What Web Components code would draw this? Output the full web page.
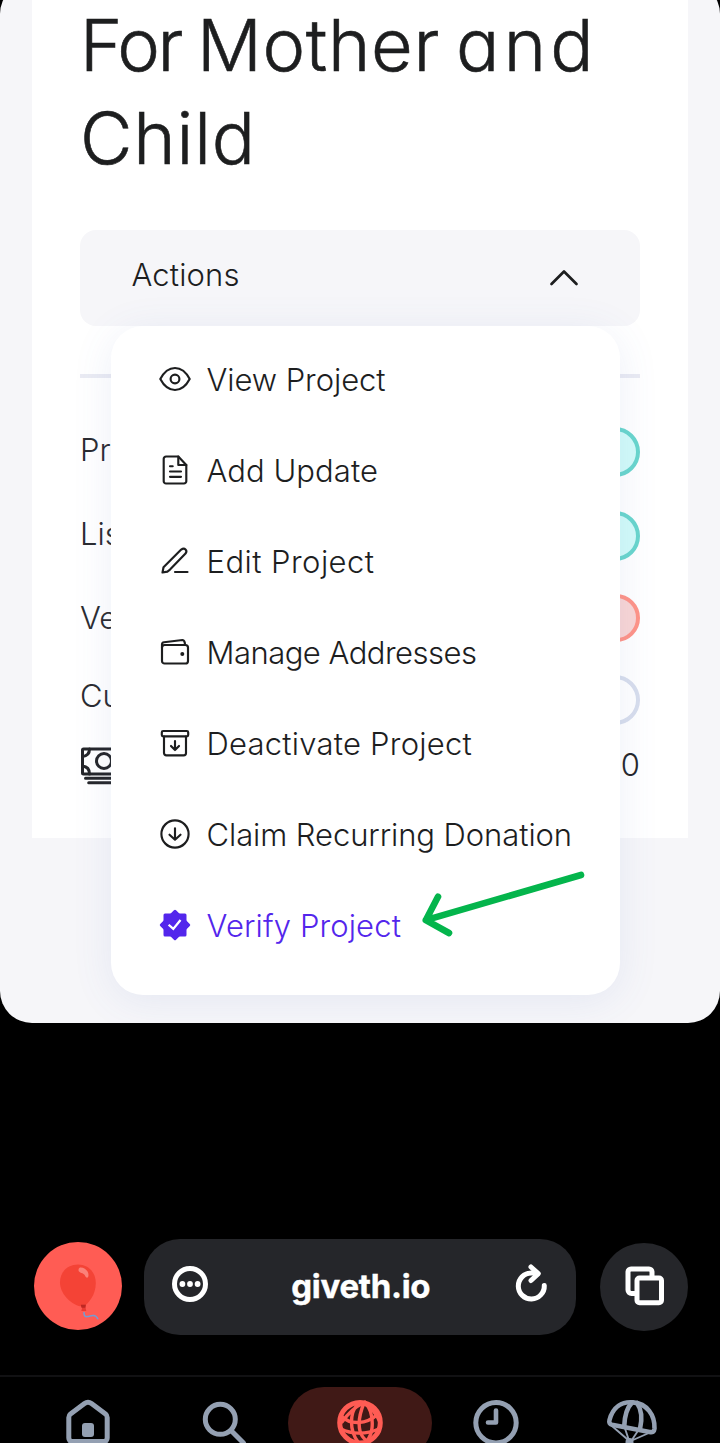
<!DOCTYPE html>
<html lang="en">
<head>
<meta charset="utf-8">
<title>giveth.io</title>
<style>
  html, body { margin: 0; background: #000; }
  body { width: 720px; height: 1443px; overflow: hidden; font-family: Inter, "Noto Sans", sans-serif; }
</style>
</head>
<body>
<phone-app></phone-app>
<script>
const define = (name, html, setup) => {
  const template = document.createElement('template');
  template.innerHTML = html;
  customElements.define(name, class extends HTMLElement {
    connectedCallback() {
      if (this.shadowRoot) return;
      this.attachShadow({ mode: 'open' }).append(template.content.cloneNode(true));
      if (setup) setup(this, this.shadowRoot);
    }
  });
};

// Single line of text whose tracking is tuned to fill a given advance width.
define('track-text', `
  <style>
    :host { display: block; white-space: nowrap; }
    span { display: inline-block; }
  </style>
  <span><slot></slot></span>`, (host, root) => {
  const span = root.querySelector('span');
  const width = parseFloat(host.getAttribute('width'));
  if (!width) return;
  const gap = (width - span.getBoundingClientRect().width) / host.textContent.length;
  span.style.letterSpacing = gap.toFixed(3) + 'px';
});

const line = (w = 2.15) => `fill="none" stroke="currentColor" stroke-width="${w}" stroke-linecap="round" stroke-linejoin="round"`;
const icons = {
  eye: [32, 32, `<g ${line()}><path d="M1.3 16C5 9 10 5 16 5s11 4 14.700 11C27 23 22 27 16 27S5 23 1.300 16z"/><circle cx="16" cy="16" r="4.400"/></g>`],
  doc: [32, 32, `<g ${line()}><path d="M19.300 2.500H7a2.300 2.300 0 0 0-2.300 2.300v22.400A2.300 2.300 0 0 0 7 29.500h18a2.300 2.300 0 0 0 2.300-2.300V11z"/><path d="M19.300 2.500V11h8M11 12.200h2.700M11 17.500h11M11 22.800h11"/></g>`],
  pen: [32, 32, `<g ${line()}><path d="M3.500 27.500l1-5.300L22.200 4.600c3.400-2.600 6.700.8 4.300 4L11 24.600l-2.600 2z"/><path d="M16 27h12.500"/></g>`],
  wallet: [32, 32, `<g ${line()}><rect x="3" y="9" width="26" height="18.500" rx="2.600"/><path d="M3 11.500V8.400c0-1.200.7-1.900 2-2.100L23.500 4c1.400-.1 2.500 2 2.500 5"/></g><circle cx="23.300" cy="18" r="2" fill="currentColor"/>`],
  archive: [32, 32, `<g ${line()}><rect x="2.800" y="4" width="26.400" height="5.300" rx="1.400"/><path d="M5 9.500V26a2.300 2.300 0 0 0 2.300 2.300h17.400A2.300 2.300 0 0 0 27 26V9.500M16 14v9M12 19l4 4 4-4"/></g>`],
  claim: [32, 32, `<g ${line()}><circle cx="16" cy="16" r="13.600"/><path d="M16 10.300V21.500M10.500 16.700l5.500 5 5.500-5"/></g>`],
  verify: [32, 32, `<g fill="currentColor" stroke="currentColor" stroke-width="3" stroke-linejoin="round"><rect x="6" y="6" width="20" height="20"/><path d="M16 2.300L29.700 16 16 29.700 2.300 16z"/></g><path d="M10.500 16.500l3.800 3.400 6.500-8" fill="none" stroke="#fff" stroke-width="2.300" stroke-linecap="square"/>`],
  chevron: [32, 20, `<path d="M3.500 17L16 4.500 28.500 17" ${line(2.7)}/>`],
  cash: [54, 38, `<g ${line(3)}><rect x="2.500" y="2" width="49" height="25" rx="1"/><circle cx="24" cy="14" r="7.500"/><path d="M9.500 2c0 4.500-2.500 7-7 7.500M2.500 19c4.500.5 7 3.500 7 8M5.500 31.200h43M8.700 35.800h37"/></g>`],
  balloon: [88, 88, `<path d="M44 22.500c10.500 0 17.800 8 17.800 18.500 0 12-7.300 20.500-12 23.300h-4C36 61.500 26 51.500 26 40.500 26 30 33.500 22.500 44 22.500z" fill="#f44336"/><path d="M46 25.500c4-.5 8.500 3 8.500 7.500 0 3.500-2.500 3.500-3.700.3-.8-2.300-6.300-2.300-6.300-5 0-1.400.5-2.400 1.500-2.800z" fill="#fb8179"/><path d="M47 63l5-.5-.5 3 .8 3.500h-5l.8-3z" fill="#e93a32"/><path d="M46.800 62.800h5l-.5 3h-3.800z" fill="#bc2823"/><path d="M50 70c-.2 3.500.8 4.900 3.500 4.600 2.500-.3 4-1.700 6.500-1.100 2.300.5 3.300 1.900 4 3.800" fill="none" stroke="#749cd4" stroke-width="1.500"/>`],
  more: [36, 36, `<circle cx="18" cy="18" r="15.500" ${line(5)}/><g fill="currentColor"><circle cx="10.400" cy="18" r="2.900"/><circle cx="18" cy="18" r="2.900"/><circle cx="25.600" cy="18" r="2.900"/></g>`],
  reload: [36, 40, `<g ${line(5)}><path d="M31.300 21.500A13 13 0 1 1 18.300 9h4.500"/><path d="M18 3l7.300 6.600-7.300 6.900"/></g>`],
  tabs: [40, 40, `<g ${line(5)}><path d="M10.500 27.500H6.500a3.500 3.500 0 0 1-3.500-3.500V6a3 3 0 0 1 3-3h18a3 3 0 0 1 3 3v4"/><rect x="12" y="12" width="24.500" height="24.800" rx="2.500"/></g>`],
  home: [48, 48, `<path d="M4.800 19.500c0-1.500.6-2.700 1.700-3.600L20.500 5.500c2.300-1.700 4.700-1.700 7 0l14 10.400c1.100.9 1.700 2.100 1.700 3.600V40c0 2-1.200 3.500-3.500 3.500H8.300c-2.300 0-3.500-1.500-3.500-3.500z" ${line(5)}/><rect x="18" y="25" width="12" height="14" rx="3" fill="currentColor"/>`],
  search: [48, 48, `<circle cx="20.300" cy="21.300" r="15" ${line(5)}/><path d="M31.500 33l12 12" ${line(5)}/>`],
  globe: [48, 48, `<g ${line(4)}><circle cx="24" cy="24.700" r="20.300" stroke-width="5"/><g stroke-width="3.400"><path d="M21 7C14 15 13 32 22 44M27 5C17 10 11 17 6 24M29 4c6 7 8 16 7 26-.4 5-2 9-5 13M28 5c-5 12-6 20-4 28 1 5 4 8 8 11"/><path d="M5 18c9 9 25 9 37-2M5 31c10 5 24 6 38 0M27 5c8 4 13 10 17 19"/></g></g>`],
  clock: [48, 48, `<circle cx="24" cy="24.700" r="20.200" ${line(5)}/><path d="M24 12.500V24.500H16" ${line(4.6)} />`],
  chute: [56, 48, `<g ${line(4.6)}><path d="M5.500 22C9 9 18 3.300 29 4.400c14 1.300 22 12.500 21.500 26.300-.2 3-2 3.800-5 3.200L8 26.700c-2.300-.5-3.200-2-2.500-4.700z"/><path d="M28 4.600c-5 5-7.500 12-7.800 24M33 5c5 7 5.500 15 3 26"/><path d="M8 28l15 13M20.500 29l4 12M34.500 32l-6 9M46 34.500L29 42" stroke-width="1.900"/><path d="M25.500 44v8" stroke-width="8"/></g>`]
};
define('app-icon', `<style>:host { display: block; flex: none; } svg { display: block; }</style>`, (host, root) => {
  const [w, h, body] = icons[host.getAttribute('name')];
  const box = document.createElement('div');
  box.innerHTML = `<svg width="${w}" height="${h}" viewBox="0 0 ${w} ${h}">${body}</svg>`;
  root.append(box.firstChild);
});

define('menu-item', `
  <style>
    :host { display: flex; align-items: center; gap: 15.500px; height: 91px; color: #1d1e1f; font-size: 31px; line-height: 40px; font-weight: 300; }
    :host([active]) { color: #5326ec; }
    ::slotted(app-icon) { margin-top: -1px; }
    .label { padding-top: 1px; }
  </style>
  <slot name="icon"></slot><div class="label"><slot></slot></div>`);

define('action-menu', `
  <style>
    :host { display: block; box-sizing: border-box; width: 509px; height: 669px; padding: 8px 0 24px 48px; border-radius: 32px; background: #fff; box-shadow: 0 6px 40px rgba(83, 106, 190, .1); }
    svg { position: absolute; left: 309px; top: 541px; }
  </style>
  <menu-item><app-icon slot="icon" name="eye"></app-icon><track-text width="179">View Project</track-text></menu-item>
  <menu-item><app-icon slot="icon" name="doc"></app-icon><track-text width="171.500">Add Update</track-text></menu-item>
  <menu-item><app-icon slot="icon" name="pen"></app-icon><track-text width="168">Edit Project</track-text></menu-item>
  <menu-item><app-icon slot="icon" name="wallet"></app-icon><track-text width="270">Manage Addresses</track-text></menu-item>
  <menu-item><app-icon slot="icon" name="archive"></app-icon><track-text width="265.500">Deactivate Project</track-text></menu-item>
  <menu-item><app-icon slot="icon" name="claim"></app-icon><track-text width="365.500">Claim Recurring Donation</track-text></menu-item>
  <menu-item active><app-icon slot="icon" name="verify"></app-icon><track-text width="194.500">Verify Project</track-text></menu-item>
  <svg width="168" height="74" viewBox="0 0 168 74" fill="none" stroke="#04b54c" stroke-width="6.600" stroke-linecap="round" stroke-linejoin="round">
    <path d="M161 8L5.800 53.200M18 29.800L5.800 53.200 29 66"/>
  </svg>`);

define('status-row', `
  <style>
    :host { display: flex; justify-content: space-between; align-items: center; height: 52px; font-size: 31px; font-weight: 300; color: #2b2c31; }
    track-text { margin-top: var(--lift, -6px); }
    i { box-sizing: border-box; display: block; width: 150px; height: var(--tall, 50px); border-radius: 25px; border: 4px solid var(--edge); background: var(--fill); }
  </style>
  <track-text><slot></slot></track-text><i></i>`);

define('project-card', `
  <style>
    :host { display: block; box-sizing: border-box; width: 656px; height: 856px; margin: 0 auto; padding: 16px 48px 0; background: #fff; }
    h1 { margin: 0; font-size: 72px; line-height: 93px; font-weight: 300; color: #1d1e1f; font-feature-settings: "cv11"; -webkit-text-stroke: .6px #1d1e1f; }
    h1 div { display: flex; gap: 16px; }
    .actions { display: flex; box-sizing: border-box; justify-content: space-between; height: 96px; margin-top: 46px; padding: 0 60px 0 51.500px; border-radius: 16px; background: #f6f6f9; font-size: 31px; line-height: 89px; font-weight: 300; color: #1d1e1f; }
    .actions app-icon { margin-top: 37px; }
    .host { position: relative; height: 0; z-index: 2; }
    action-menu { position: absolute; left: 31px; top: 0; }
    hr { margin: 48px 0 0; height: 4px; border: 0; background: #eaebf3; }
    .rows { display: grid; grid-template-rows: 84px 82px 82px 63px; margin-top: 48px; }
    .cash { display: flex; justify-content: space-between; margin-top: 9px; color: #25262a; font-size: 31px; font-weight: 300; line-height: 38px; }
    .cash app-icon { margin-top: 1px; }
  </style>
  <h1>
    <div><track-text width="101">For</track-text><track-text width="243">Mother</track-text><track-text width="142">and</track-text></div>
    <div><track-text width="176">Child</track-text></div>
  </h1>
  <div class="actions"><track-text width="108">Actions</track-text><app-icon name="chevron"></app-icon></div>
  <div class="host"><action-menu></action-menu></div>
  <hr>
  <div class="rows">
    <status-row style="--edge:#69d6cd;--fill:#d2fbf9">Pr</status-row>
    <status-row style="--edge:#69d6cd;--fill:#d2fbf9">Lis</status-row>
    <status-row style="--edge:#ff9488;--fill:#f9d6d5;--lift:-2px;--tall:48px">Ve</status-row>
    <status-row style="--edge:#d8deed;--fill:transparent;--lift:-10px">Cu</status-row>
  </div>
  <div class="cash"><app-icon name="cash"></app-icon><track-text>0</track-text></div>`);

define('page-view', `
  <style>
    :host { display: block; height: 1041px; margin-top: -18px; border-radius: 32px; background: #f6f6f9; overflow: hidden; }
  </style>
  <slot></slot>`);

define('address-bar', `
  <style>
    :host { display: flex; align-items: center; height: 96px; padding: 0 32px 0 34px; margin-top: 216px; color: #fff; }
    .round { display: grid; place-items: center; box-sizing: border-box; width: 88px; height: 88px; border-radius: 50%; background: #25262a; margin: 0 0 0 24px; padding: 0 0 3px 1px; }
    .red { background: #ff5c54; margin: -2px 22px 0 0; padding: 0; }
    .url { display: flex; box-sizing: border-box; align-items: center; justify-content: space-between; width: 432px; height: 96px; padding: 0 27.500px 0 28px; border-radius: 36px; background: #25262a; font-size: 33px; font-weight: 700; }
    .url app-icon { margin-top: -6px; }
    .url track-text { margin: -2px 0 0 1px; -webkit-text-stroke: .4px #fff; }
  </style>
  <div class="round red"><app-icon name="balloon"></app-icon></div>
  <div class="url"><app-icon name="more"></app-icon><track-text width="139">giveth.io</track-text><app-icon name="reload"></app-icon></div>
  <div class="round"><app-icon name="tabs"></app-icon></div>`);

define('tab-bar', `
  <style>
    :host { display: grid; grid-template-columns: repeat(5, 136px); justify-content: center; margin-top: 40px; padding-top: 10px; border-top: 2px solid #111113; color: #94a0b2; }
    div { display: flex; justify-content: center; height: 72px; padding-top: 11px; box-sizing: border-box; }
    .on { width: 144px; margin-left: -4px; border-radius: 36px; background: #401916; color: #ff5c54; }
  </style>
  <div><app-icon name="home"></app-icon></div>
  <div><app-icon name="search"></app-icon></div>
  <div class="on"><app-icon name="globe"></app-icon></div>
  <div><app-icon name="clock"></app-icon></div>
  <div><app-icon name="chute"></app-icon></div>`);

define('phone-app', `
  <style>:host { display: flow-root; height: 1443px; overflow: hidden; }</style>
  <page-view><project-card></project-card></page-view>
  <address-bar></address-bar>
  <tab-bar></tab-bar>`);
</script>
</body>
</html>
